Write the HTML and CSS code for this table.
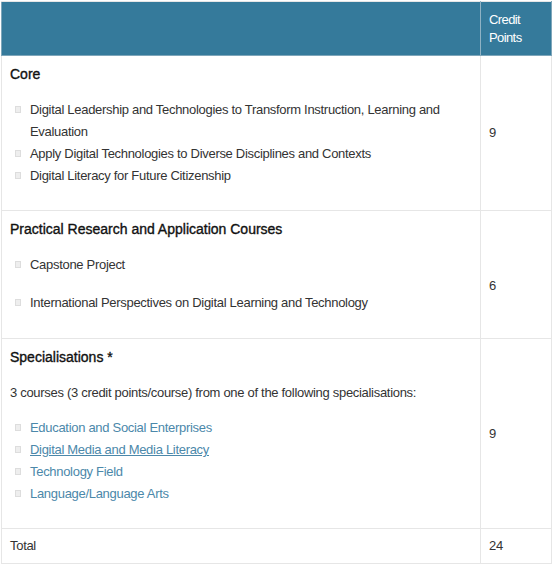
FILE: index.html
```html
<!DOCTYPE html>
<html lang="en">
<head>
    <meta charset="UTF-8">
    <meta name="viewport" content="width=device-width, initial-scale=1.0">
    <title>Course Structure</title>
    <link rel="stylesheet" href="styles.css">
</head>
<body>
    <table class="structure">
        <thead>
            <tr>
                <th class="name"></th>
                <th class="points">Credit Points</th>
            </tr>
        </thead>
        <tbody>
            <tr>
                <td>
                    <h4>Core</h4>
                    <ul>
                        <li>Digital Leadership and Technologies to Transform Instruction, Learning and Evaluation</li>
                        <li>Apply Digital Technologies to Diverse Disciplines and Contexts</li>
                        <li>Digital Literacy for Future Citizenship</li>
                    </ul>
                </td>
                <td class="points">9</td>
            </tr>
            <tr>
                <td>
                    <h4>Practical Research and Application Courses</h4>
                    <ul class="spaced">
                        <li>Capstone Project</li>
                        <li>International Perspectives on Digital Learning and Technology</li>
                    </ul>
                </td>
                <td class="points low">6</td>
            </tr>
            <tr>
                <td>
                    <h4>Specialisations *</h4>
                    <p>3 courses (3 credit points/course) from one of the following specialisations:</p>
                    <ul class="links">
                        <li><a href="#">Education and Social Enterprises</a></li>
                        <li><a href="#" class="hover">Digital Media and Media Literacy</a></li>
                        <li><a href="#">Technology Field</a></li>
                        <li><a href="#">Language/Language Arts</a></li>
                    </ul>
                </td>
                <td class="points">9</td>
            </tr>
            <tr class="total">
                <td>Total</td>
                <td class="points">24</td>
            </tr>
        </tbody>
    </table>
</body>
</html>
```

FILE: styles.css
```css
body {margin: 0; padding: 1px 0 0 1px; font-family: "Liberation Sans", Arial, sans-serif; font-size: 13px; letter-spacing: -0.3px; color: #333333; background: #ffffff;}

.structure {width: 551px; border-collapse: collapse; border: 1px solid #e6e6e6;}
.structure th, .structure td {border: 1px solid #e6e6e6; padding: 8px; text-align: left; vertical-align: top; line-height: 20px;}
.structure thead th {background: #357a9b; color: #ffffff; font-weight: normal; line-height: 18px; letter-spacing: -0.6px; border-color: #7ea6ba; border-top-color: #e6e6e6; height: 36px; padding-top: 9px;}
.structure th.name {border-right-color: #8fb2c4;}
.structure th.points, .structure td.points {width: 54px;}
.structure td.points {vertical-align: middle;}
.structure td.low {padding-top: 30px;}

h4 {margin: 0 0 15px; font-size: 14px; font-weight: normal; color: #111111; line-height: 20px; letter-spacing: 0; -webkit-text-stroke: 0.35px #111111;}
p {margin: 0 0 13px; line-height: 22px;}

ul {list-style: none; margin: 0 0 15px; padding: 0 0 0 20px;}
ul li {line-height: 22px;}
ul li::before {content: ""; display: inline-block; width: 4px; height: 5px; margin-left: -15px; margin-right: 9px; border: 1px solid #dddddd; background: #eeeeee; vertical-align: 1px;}
ul.spaced li {margin-bottom: 16px;}
ul.spaced li:last-child {margin-bottom: 0;}
ul.spaced {margin-bottom: 16px;}

a {color: #4b88aa; text-decoration: none;}
a.hover {text-decoration: underline;}

.total td {line-height: 18px; padding-top: 8px; padding-bottom: 8px;}
```
